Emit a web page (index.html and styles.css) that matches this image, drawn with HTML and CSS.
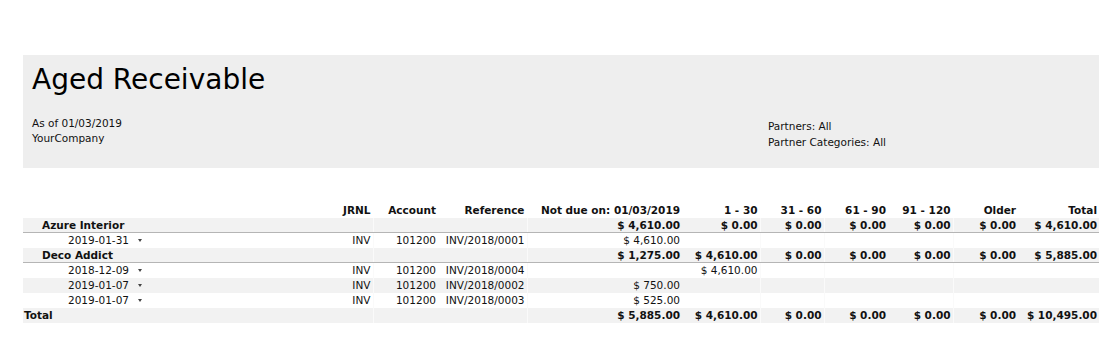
FILE: index.html
```html
<!DOCTYPE html>
<html>
<head>
<meta charset="utf-8">
<link rel="stylesheet" href="styles.css">
</head>
<body>
<div class="page">
  <div class="report-head">
    <h1 class="title">Aged Receivable</h1>
    <div class="meta">
      <div class="meta-left">
        <div>As of 01/03/2019</div>
        <div>YourCompany</div>
      </div>
      <div class="meta-right">
        <div>Partners: All</div>
        <div>Partner Categories: All</div>
      </div>
    </div>
  </div>
  <table class="report">
    <colgroup>
      <col class="c-name"><col class="c-jrnl"><col class="c-acc"><col class="c-ref"><col class="c-nd">
      <col class="c-1"><col class="c-2"><col class="c-3"><col class="c-4"><col class="c-5"><col class="c-tot">
    </colgroup>
    <thead>
      <tr>
        <th></th><th>JRNL</th><th class="vl">Account</th><th>Reference</th><th class="vl">Not due on: 01/03/2019</th>
        <th>1 - 30</th><th class="vl">31 - 60</th><th class="vl">61 - 90</th><th>91 - 120</th><th class="vl">Older</th><th>Total</th>
      </tr>
    </thead>
    <tbody>
      <tr class="partner odd">
        <td class="name lvl1">Azure Interior</td><td></td><td class="vl"></td><td></td><td class="vl">$ 4,610.00</td>
        <td>$ 0.00</td><td class="vl">$ 0.00</td><td class="vl">$ 0.00</td><td>$ 0.00</td><td class="vl">$ 0.00</td><td>$ 4,610.00</td>
      </tr>
      <tr class="line">
        <td class="name lvl2">2019-01-31<span class="caret"></span></td><td>INV</td><td class="vl">101200</td><td>INV/2018/0001</td><td class="vl">$ 4,610.00</td>
        <td></td><td class="vl"></td><td class="vl"></td><td></td><td class="vl"></td><td></td>
      </tr>
      <tr class="partner odd">
        <td class="name lvl1">Deco Addict</td><td></td><td class="vl"></td><td></td><td class="vl">$ 1,275.00</td>
        <td>$ 4,610.00</td><td class="vl">$ 0.00</td><td class="vl">$ 0.00</td><td>$ 0.00</td><td class="vl">$ 0.00</td><td>$ 5,885.00</td>
      </tr>
      <tr class="line">
        <td class="name lvl2">2018-12-09<span class="caret"></span></td><td>INV</td><td class="vl">101200</td><td>INV/2018/0004</td><td class="vl"></td>
        <td>$ 4,610.00</td><td class="vl"></td><td class="vl"></td><td></td><td class="vl"></td><td></td>
      </tr>
      <tr class="line odd">
        <td class="name lvl2">2019-01-07<span class="caret"></span></td><td>INV</td><td class="vl">101200</td><td>INV/2018/0002</td><td class="vl">$ 750.00</td>
        <td></td><td class="vl"></td><td class="vl"></td><td></td><td class="vl"></td><td></td>
      </tr>
      <tr class="line">
        <td class="name lvl2">2019-01-07<span class="caret"></span></td><td>INV</td><td class="vl">101200</td><td>INV/2018/0003</td><td class="vl">$ 525.00</td>
        <td></td><td class="vl"></td><td class="vl"></td><td></td><td class="vl"></td><td></td>
      </tr>
      <tr class="total odd">
        <td class="name lvl0">Total</td><td></td><td class="vl"></td><td></td><td class="vl">$ 5,885.00</td>
        <td>$ 4,610.00</td><td class="vl">$ 0.00</td><td class="vl">$ 0.00</td><td>$ 0.00</td><td class="vl">$ 0.00</td><td>$ 10,495.00</td>
      </tr>
    </tbody>
  </table>
</div>
</body>
</html>
```
FILE: styles.css
```css
html, body {
  margin: 0;
  padding: 0;
  background: #ffffff;
}
body {
  font-family: "DejaVu Sans", "Liberation Sans", sans-serif;
  color: #111111;
  font-size: 10.5px;
}
.page {
  padding: 55px 20px 0 23px;
  width: 1076px;
}
.report-head {
  background: #eeeeee;
  height: 113px;
  padding: 0 9px;
  box-sizing: border-box;
}
.title {
  margin: 0;
  padding-top: 8px;
  font-size: 28px;
  font-weight: normal;
  line-height: 33px;
  color: #000000;
}
.meta {
  display: grid;
  grid-template-columns: 736px 1fr;
  margin-top: 20px;
  line-height: 15px;
  color: #111111;
}
.meta-right {
  padding-top: 2px;
  line-height: 16px;
}
.report {
  margin-top: 34px;
  width: 1076px;
  border-collapse: collapse;
  table-layout: fixed;
}
.c-name { width: 310px; }
.c-jrnl { width: 40px; }
.c-acc { width: 65px; }
.c-ref { width: 89px; }
.c-nd { width: 155px; }
.c-1 { width: 78px; }
.c-2 { width: 64px; }
.c-3 { width: 64px; }
.c-4 { width: 65px; }
.c-5 { width: 65px; }
.c-tot { width: 81px; }
.report th, .report td {
  padding: 0 2px 0 0;
  height: 15px;
  line-height: 15px;
  text-align: right;
  white-space: nowrap;
  overflow: visible;
}
.report th {
  font-weight: bold;
  padding-top: 1px;
}
.report td.vl {
  border-left: 1px solid #fafafa;
}
.report th.vl {
  border-left: 1px solid transparent;
}
.report tr.odd td {
  background: #f2f2f2;
}
.report tr.partner td, .report tr.total td {
  font-weight: bold;
}
.report tr.partner td {
  border-bottom: 1px solid #b5b5b5;
  height: 14px;
  line-height: 14px;
}
.report td.name {
  text-align: left;
}
.lvl0 { padding-left: 1px !important; }
.lvl1 { padding-left: 19px !important; }
.lvl2 { padding-left: 45px !important; }
.caret {
  display: inline-block;
  width: 0;
  height: 0;
  border-left: 2.5px solid transparent;
  border-right: 2.5px solid transparent;
  border-top: 3px solid #444444;
  vertical-align: middle;
  margin-left: 9px;
  margin-bottom: 2px;
}
```
